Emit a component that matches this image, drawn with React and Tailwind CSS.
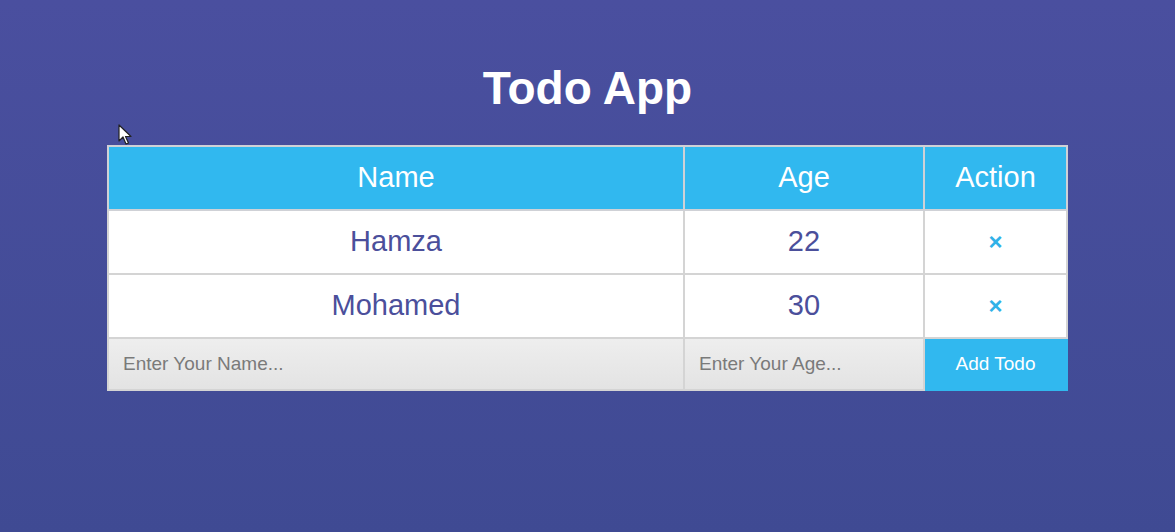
import React, { useState } from "react";

const App = () => {
    const [todos, setTodos] = useState([
        { name: "Hamza", age: 22 },
        { name: "Mohamed", age: 30 },
    ]);
    const [name, setName] = useState("");
    const [age, setAge] = useState("");

    const addTodo = () => {
        if (!name || !age) return;
        setTodos([...todos, { name, age }]);
        setName("");
        setAge("");
    };

    const removeTodo = (index) => {
        setTodos(todos.filter((_, i) => i !== index));
    };

    return (
        <div className="relative min-h-[532px] bg-gradient-to-b from-[#4a4f9f] to-[#3f4a93] font-['Liberation_Sans',Arial,sans-serif] pt-[58px]">
            {/* mouse pointer from the capture */}
            <svg className="absolute left-[118px] top-[124px]" width="14" height="22" viewBox="0 0 14 22">
                <path d="M1 1 L1 17 L5 13 L8 20 L10.5 19 L7.5 12.5 L13 12.5 Z" fill="#fff" stroke="#222" strokeWidth="1.2" strokeLinejoin="round" />
            </svg>

            <h1 className="text-center text-white font-bold text-[46px] leading-[60px]">Todo App</h1>

            <div className="mt-[27px] flex justify-center">
                <table className="w-[959px] border-collapse border border-[#c9cbd8] table-fixed">
                    <colgroup>
                        <col className="w-[576px]" />
                        <col className="w-[240px]" />
                        <col className="w-[143px]" />
                    </colgroup>
                    <thead>
                        <tr className="bg-[#31b8ef] text-white text-[29px] h-[64px]">
                            <th className="font-normal border-2 border-[#cfd1d6]">Name</th>
                            <th className="font-normal border-2 border-[#cfd1d6]">Age</th>
                            <th className="font-normal border-2 border-[#cfd1d6]">Action</th>
                        </tr>
                    </thead>
                    <tbody>
                        {todos.map((todo, i) => (
                            <tr key={i} className="bg-white text-[#4b4f9b] text-[29px] h-[64px]">
                                <td className="text-center border-2 border-[#d4d4d4]">{todo.name}</td>
                                <td className="text-center border-2 border-[#d4d4d4]">{todo.age}</td>
                                <td className="text-center border-2 border-[#d4d4d4]">
                                    <span
                                        onClick={() => removeTodo(i)}
                                        className="cursor-pointer text-[#31b1e8] text-[24px] font-bold leading-none relative -top-[1px]"
                                    >
                                        ×
                                    </span>
                                </td>
                            </tr>
                        ))}
                        <tr className="h-[52px]">
                            <td className="p-0 border-2 border-[#d4d4d4] bg-gradient-to-b from-[#eeeeee] to-[#e3e3e3]">
                                <input
                                    type="text"
                                    placeholder="Enter Your Name..."
                                    value={name}
                                    onChange={(e) => setName(e.target.value)}
                                    className="w-full h-[50px] px-[14px] bg-transparent outline-none text-[19px] text-[#555] placeholder:text-[#7a7a7a]"
                                />
                            </td>
                            <td className="p-0 border-2 border-[#d4d4d4] bg-gradient-to-b from-[#eeeeee] to-[#e3e3e3]">
                                <input
                                    type="text"
                                    placeholder="Enter Your Age..."
                                    value={age}
                                    onChange={(e) => setAge(e.target.value)}
                                    className="w-full h-[50px] px-[14px] bg-transparent outline-none text-[19px] text-[#555] placeholder:text-[#7a7a7a]"
                                />
                            </td>
                            <td className="p-0 border-2 border-[#d4d4d4] border-r-[#31b8ef] border-b-[#31b8ef] bg-[#31b8ef]">
                                <button
                                    onClick={addTodo}
                                    className="w-full h-[50px] text-white text-[19px] cursor-pointer"
                                >
                                    Add Todo
                                </button>
                            </td>
                        </tr>
                    </tbody>
                </table>
            </div>
        </div>
    );
};

export default App;
